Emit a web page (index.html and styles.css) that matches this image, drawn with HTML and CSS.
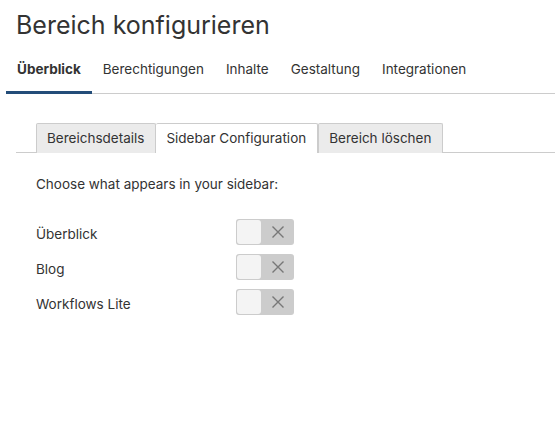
FILE: index.html
```html
<!DOCTYPE html>
<html lang="de">
<head>
    <meta charset="UTF-8">
    <title>Bereich konfigurieren</title>
    <link rel="stylesheet" href="styles.css">
</head>
<body>

    <h1 class="title">Bereich konfigurieren</h1>

    <!-- Haupt-Tabs -->
    <div class="nav">
        <a class="nav-item active">Überblick</a>
        <a class="nav-item">Berechtigungen</a>
        <a class="nav-item">Inhalte</a>
        <a class="nav-item">Gestaltung</a>
        <a class="nav-item">Integrationen</a>
    </div>

    <div class="content">
        <!-- Unter-Tabs -->
        <div class="subnav">
            <a class="subtab">Bereichsdetails</a>
            <a class="subtab current">Sidebar Configuration</a>
            <a class="subtab">Bereich löschen</a>
        </div>

        <p class="intro">Choose what appears in your sidebar:</p>

        <div class="row">
            <span class="label">Überblick</span>
            <span class="toggle"><span class="knob"></span><svg class="cross" viewBox="0 0 12 12"><path d="M0.5 0.5L11.5 11.5M11.5 0.5L0.5 11.5"/></svg></span>
        </div>
        <div class="row">
            <span class="label">Blog</span>
            <span class="toggle"><span class="knob"></span><svg class="cross" viewBox="0 0 12 12"><path d="M0.5 0.5L11.5 11.5M11.5 0.5L0.5 11.5"/></svg></span>
        </div>
        <div class="row">
            <span class="label">Workflows Lite</span>
            <span class="toggle"><span class="knob"></span><svg class="cross" viewBox="0 0 12 12"><path d="M0.5 0.5L11.5 11.5M11.5 0.5L0.5 11.5"/></svg></span>
        </div>
    </div>

</body>
</html>
```

FILE: styles.css
```css
body {
    margin: 0;
    background: #fff;
    font-family: Inter, "Liberation Sans", sans-serif;
    color: #333;
}

.title {
    margin: 0;
    padding: 10px 0 0 16px;
    height: 38px;
    font-size: 25px;
    font-weight: 400;
    line-height: 30px;
    color: #333;
}

/* Haupt-Tabs */
.nav {
    display: flex;
    margin-left: 6px;
    border-bottom: 1px solid #ccc;
    height: 45px;
}

.nav-item {
    padding: 13px 11px 0;
    font-size: 13.5px;
    line-height: 17px;
    color: #333;
    border-bottom: 3px solid transparent;
    margin-bottom: -1px;
}

.nav-item.active {
    font-weight: 700;
    border-bottom-color: #234d79;
}

.content {
    padding: 29px 0 0 16px;
}

/* Unter-Tabs */
.subnav {
    display: flex;
    padding-left: 20px;
    border-bottom: 1px solid #ccc;
    height: 29px;
}

.subtab {
    box-sizing: border-box;
    height: 30px;
    padding: 6px 11px 0 10px;
    font-size: 13.5px;
    line-height: 17px;
    color: #333;
    background: #ebebeb;
    border: 1px solid #ccc;
    border-bottom: none;
    border-radius: 2px 2px 0 0;
}

.subtab + .subtab {
    border-left: none;
}

.subtab.current {
    background: #fff;
}

.subtab.current + .subtab {
    border-left: 1px solid #ccc;
}

.intro {
    margin: 0;
    padding: 23px 0 0 20px;
    font-size: 13.5px;
    line-height: 17px;
    height: 38px;
}

.row {
    display: flex;
    align-items: center;
    padding-left: 20px;
    height: 35px;
}

.label {
    width: 200px;
    padding-top: 5px;
    font-size: 13.5px;
}

/* Schalter */
.toggle {
    display: flex;
    align-items: center;
    width: 58px;
    height: 26px;
    background: #ccc;
    border-radius: 3px;
}

.knob {
    margin: 1px;
    width: 24px;
    height: 24px;
    background: #f4f4f4;
    border-radius: 3px;
}

.cross {
    margin-left: 10px;
    width: 12px;
    height: 12px;
    stroke: #777;
    stroke-width: 1.4;
    fill: none;
}
```
